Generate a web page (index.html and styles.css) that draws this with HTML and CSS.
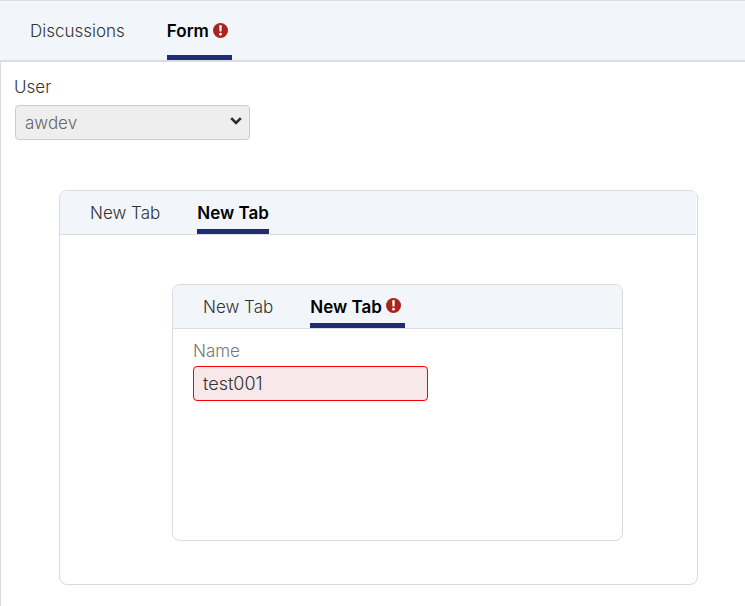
FILE: index.html
```html
<!DOCTYPE html>
<html lang="en">
<head>
<meta charset="utf-8">
<meta name="viewport" content="width=device-width, initial-scale=1">
<title>Form</title>
<link rel="stylesheet" href="styles.css">
</head>
<body>
<div class="page">
  <nav class="tabs tabs-main" role="tablist">
    <button class="tab" type="button" role="tab" aria-selected="false">Discussions</button>
    <button class="tab active" type="button" role="tab" aria-selected="true">Form
      <svg class="alert" viewBox="0 0 15 15" aria-hidden="true"><circle cx="7.5" cy="7.5" r="7.5" fill="#a9241c"/><path d="M6.2 2.300h2.600l-.3 6.200H6.500z" fill="#fff"/><circle cx="7.5" cy="11.2" r="1.400" fill="#fff"/></svg>
    </button>
  </nav>
  <main class="content">
    <div class="field">
      <label for="user">User</label>
      <div class="select-wrap">
        <select id="user" class="control" disabled><option>awdev</option></select>
        <svg class="chevron" viewBox="0 0 12 8" aria-hidden="true"><path d="M1.200 1.200L6 6l4.800-4.800" fill="none" stroke="#2b2b2b" stroke-width="2.600"/></svg>
      </div>
    </div>
    <section class="card outer">
      <nav class="tabs" role="tablist">
        <button class="tab" type="button" role="tab" aria-selected="false">New Tab</button>
        <button class="tab active" type="button" role="tab" aria-selected="true">New Tab</button>
      </nav>
      <section class="card inner">
        <nav class="tabs" role="tablist">
          <button class="tab" type="button" role="tab" aria-selected="false">New Tab</button>
          <button class="tab active" type="button" role="tab" aria-selected="true">New Tab
            <svg class="alert" viewBox="0 0 15 15" aria-hidden="true"><circle cx="7.5" cy="7.5" r="7.5" fill="#a9241c"/><path d="M6.2 2.300h2.600l-.3 6.200H6.500z" fill="#fff"/><circle cx="7.5" cy="11.2" r="1.400" fill="#fff"/></svg>
          </button>
        </nav>
        <div class="field field-name">
          <label for="name">Name</label>
          <input id="name" class="control invalid" type="text" value="test001" aria-invalid="true">
        </div>
      </section>
    </section>
  </main>
</div>
</body>
</html>
```
FILE: styles.css
```css
* {
  box-sizing: border-box;
}

body {
  margin: 0;
  background: #fff;
  color: #333;
  font: 300 17px/24px Inter, "Liberation Sans", sans-serif;
}

.page {
  display: flex;
  flex-direction: column;
  min-height: 100vh;
}

.tabs {
  display: flex;
  gap: 37px;
  height: 44px;
  padding: 0 30px;
  background: #f2f6fb;
  border-bottom: 1px solid #dadde1;
}

.tabs-main {
  gap: 42px;
  height: 62px;
  border-top: 1px solid #dadde1;
  border-bottom-width: 2px;
}

.tab {
  display: flex;
  align-items: center;
  gap: 4px;
  padding: 5px 0 0;
  border: 0;
  border-bottom: 5px solid transparent;
  background: none;
  color: #333;
  font: inherit;
}

.tabs-main .tab {
  padding-top: 6px;
}

.tab.active {
  border-bottom-color: #212c74;
  color: #000;
  font-weight: 600;
}

.alert {
  flex: none;
  width: 15px;
  height: 15px;
  margin: 0 4px 2px 0;
}

.content {
  flex: 1;
  padding: 13px 47px 21px 13px;
  border-left: 1px solid #dadada;
}

.field {
  display: flex;
  flex-direction: column;
  align-items: flex-start;
  gap: 6px;
}

.select-wrap {
  position: relative;
  margin-left: 1px;
}

.control {
  display: block;
  width: 235px;
  height: 35px;
  padding: 0 9px;
  border: 1px solid #ccc;
  border-radius: 4px;
  font: inherit;
  color: #333;
}

select.control {
  appearance: none;
  background: #eee;
  color: #666;
  opacity: 1;
}

.chevron {
  position: absolute;
  top: 12px;
  right: 8px;
  width: 12px;
  height: 8px;
  pointer-events: none;
}

.invalid {
  border-color: #f00;
  background: #f9e8e9;
  font-size: 18px;
}

.card {
  border: 1px solid #dadada;
  border-radius: 8px;
  overflow: hidden;
}

.outer {
  min-height: 395px;
  margin: 50px 0 0 45px;
  padding-right: 1px;
}

.inner {
  min-height: 257px;
  margin: 49px 73px 43px 112px;
}

.field-name {
  padding: 10px 20px;
  gap: 3px;
  color: #777;
}
```
